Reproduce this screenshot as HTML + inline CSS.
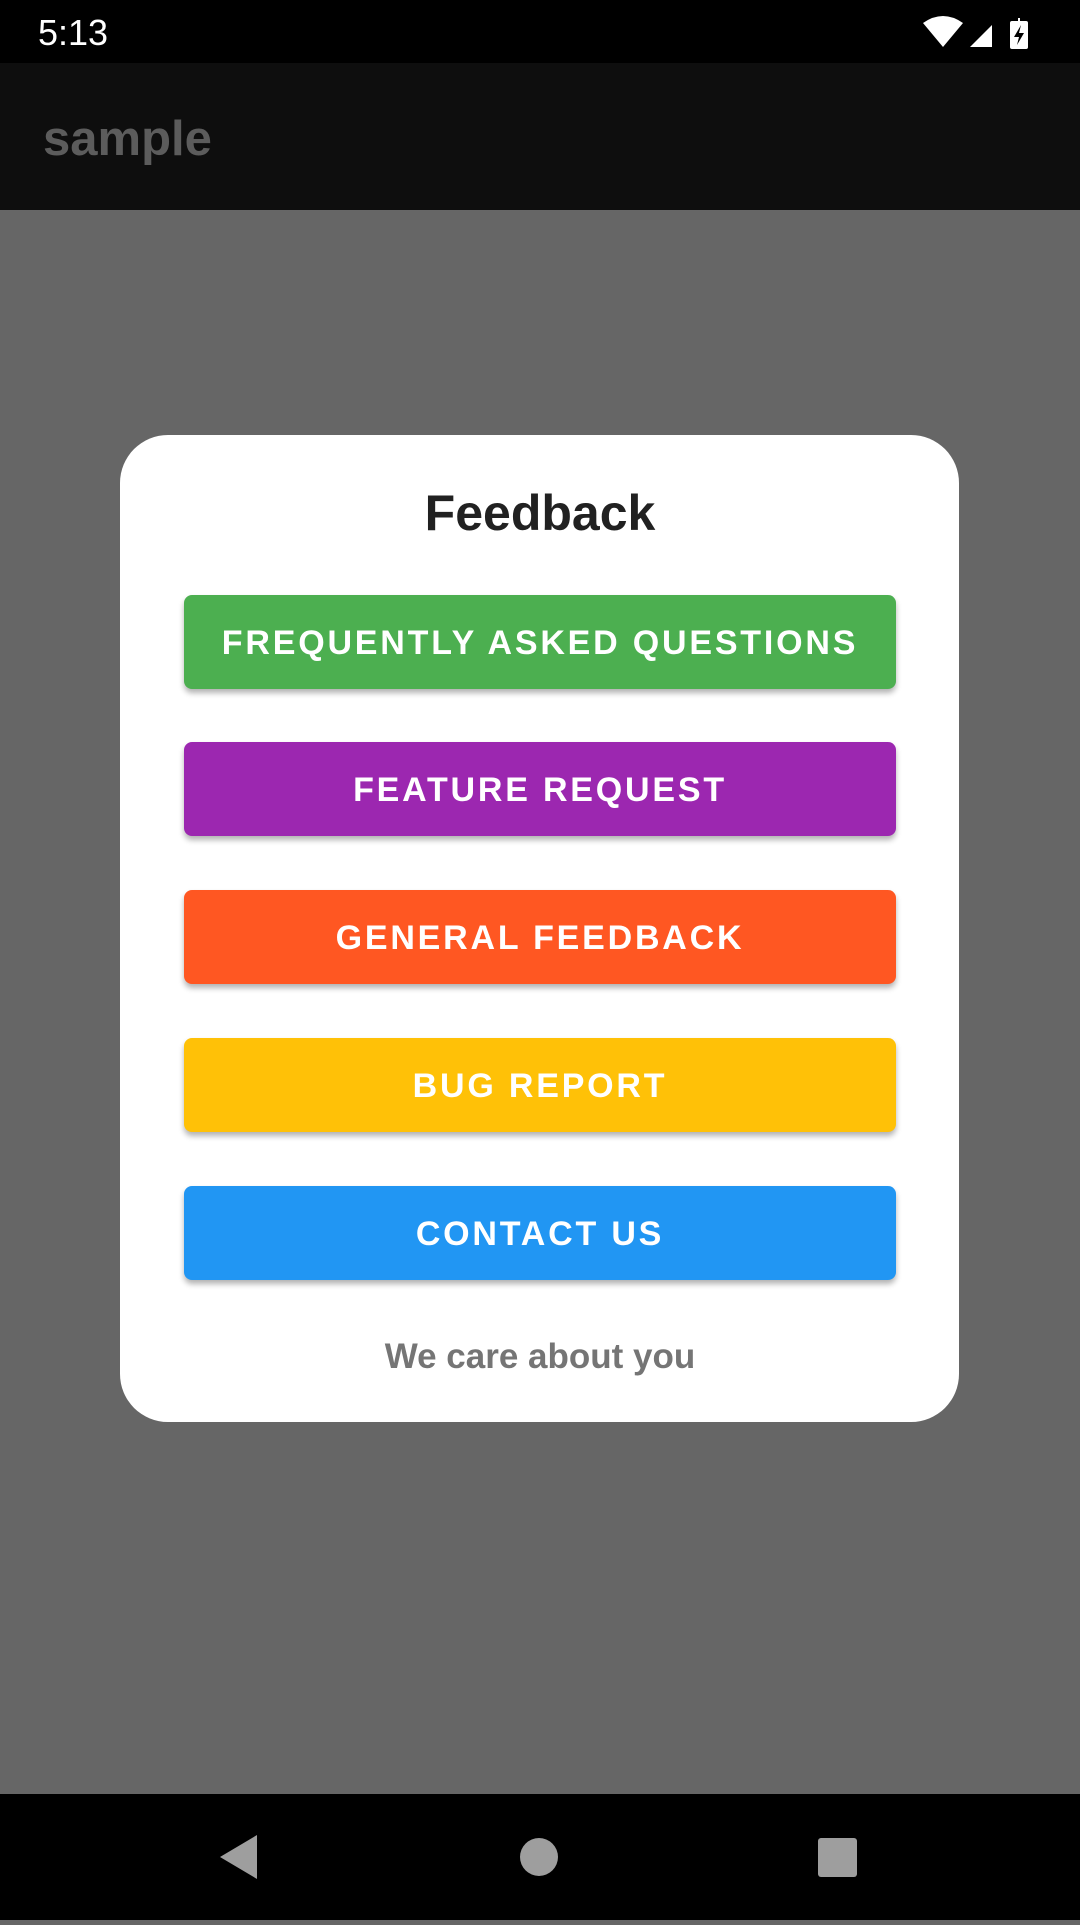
<!DOCTYPE html>
<html><head><meta charset="utf-8"><style>
*{margin:0;padding:0;box-sizing:border-box}
body{width:1080px;height:1920px;background:#666;font-family:"Liberation Sans",sans-serif;position:relative;overflow:hidden}
.status{position:absolute;top:0;left:0;width:1080px;height:63px;background:#000;color:#fff}
.time{position:absolute;left:38px;top:12px;font-size:36px}
.appbar{position:absolute;top:63px;left:0;width:1080px;height:147px;background:#0e0e0e}
.appbar span{position:absolute;left:43px;top:48px;font-size:49px;color:#5c5c5c;font-weight:bold}
.dialog{position:absolute;left:120px;top:435px;width:839px;height:987px;background:#fff;border-radius:48px}
.title{position:absolute;top:484px;left:0;width:1080px;text-align:center;font-size:50px;color:#212121;font-weight:bold}
.btn{position:absolute;left:184px;width:712px;height:94px;border-radius:8px;color:#fff;font-size:34px;font-weight:bold;letter-spacing:2.8px;text-align:center;line-height:96px;box-shadow:0 4px 6px rgba(0,0,0,.3)}
.sub{position:absolute;top:1337px;left:0;width:1080px;text-align:center;font-size:35px;font-weight:bold;color:#757575}
.nav{position:absolute;top:1794px;left:0;width:1080px;height:126px;background:#000}
</style></head><body>
<div class="status"><span class="time">5:13</span>
<svg style="position:absolute;left:920px;top:14px" width="110" height="36" viewBox="0 0 110 36">
<path d="M3 9 Q23 -5 43 9 L23 33 Z" fill="#fff"/>
<path d="M50 33 L72 11 L72 33 Z" fill="#fff"/>
<rect x="98" y="4" width="2" height="4" fill="#fff"/>
<rect x="90" y="7" width="18" height="28" rx="2" fill="#fff"/>
<path d="M101 11 L94 23 L99 23 L97 31 L104 19 L99 19 Z" fill="#000"/>
</svg></div>
<div class="appbar"><span>sample</span></div>
<div class="dialog"></div>
<div class="title">Feedback</div>
<div class="btn" style="top:595px;background:#4CAF50">FREQUENTLY ASKED QUESTIONS</div>
<div class="btn" style="top:742px;background:#9C27B0">FEATURE REQUEST</div>
<div class="btn" style="top:890px;background:#FF5722">GENERAL FEEDBACK</div>
<div class="btn" style="top:1038px;background:#FFC107">BUG REPORT</div>
<div class="btn" style="top:1186px;background:#2196F3">CONTACT US</div>
<div class="sub">We care about you</div>
<div class="nav">
<svg width="1080" height="126"><path d="M220 63 L257 41 L257 85 Z" fill="#9e9e9e"/><circle cx="539" cy="63" r="19" fill="#9e9e9e"/><rect x="818" y="44" width="39" height="39" rx="3" fill="#9e9e9e"/></svg>
</div>
</body></html>
